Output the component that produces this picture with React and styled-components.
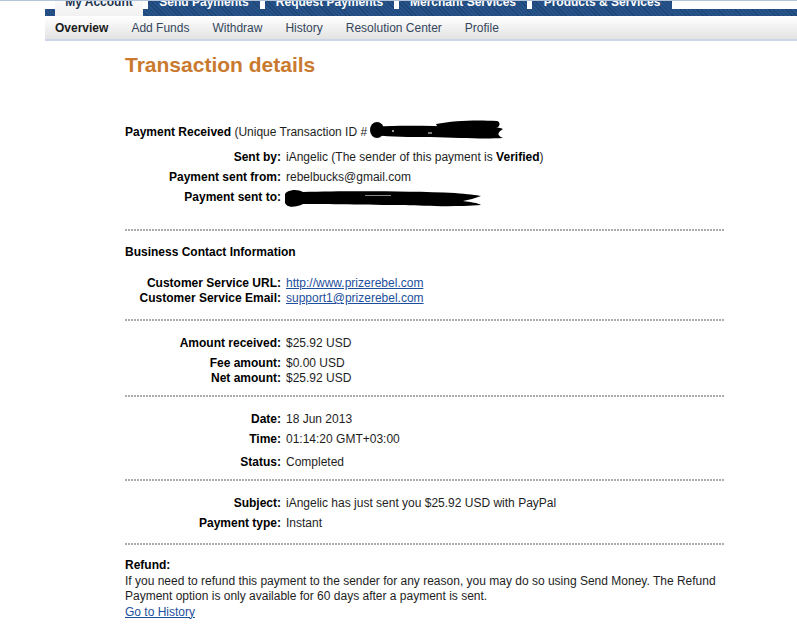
import React from 'react';
import styled, { createGlobalStyle } from 'styled-components';

const Global = createGlobalStyle`
  html, body { margin: 0; padding: 0; background: #fff; }
  body {
    font-family: "Liberation Sans", Arial, sans-serif;
    font-size: 12px;
    color: #1e1e1e;
  }
`;

const Header = styled.header`
  border-top: 1px solid #b5c5d9;
`;

const TabBar = styled.nav`
  margin-left: 45px;
  height: 15px;
  display: flex;
  gap: 5px;
  padding-left: 10px;
  overflow: hidden;
  background:
    linear-gradient(to bottom, #fff 0 8px, transparent 8px),
    repeating-linear-gradient(45deg, #1c4676 0 1px, #27538a 1px 3px);
`;

const Tab = styled.div`
  width: ${p => p.$w}px;
  flex: none;
  height: 15px;
  overflow: hidden;
  display: flex;
  justify-content: center;
  font-weight: bold;
  font-size: 12px;
  color: ${p => (p.$active ? '#1f3450' : '#fff')};
  background: ${p =>
    p.$active
      ? 'linear-gradient(to bottom, #fafafa, #f1f1f1)'
      : 'repeating-linear-gradient(45deg, #1c4676 0 1px, #27538a 1px 3px)'};
`;

const TabText = styled.span`
  display: block;
  line-height: 14px;
  margin-top: -6px;
  white-space: nowrap;
`;

const SubNav = styled.nav`
  margin-left: 45px;
  height: 23px;
  display: flex;
  align-items: center;
  gap: 23px;
  padding-left: 10px;
  background: linear-gradient(to bottom, #ffffff, #e3e3e3);
  border-bottom: 2px solid #cad6e5;
`;

const SubItem = styled.span`
  line-height: 23px;
  padding-top: 1px;
  font-size: 12px;
  color: ${p => (p.$active ? '#1a1a1a' : '#34465c')};
  font-weight: ${p => (p.$active ? 'bold' : 'normal')};
`;

const Main = styled.main`
  margin-left: 125px;
  width: 600px;
`;

const Title = styled.h1`
  margin: 12px 0 0;
  font-size: 21px;
  line-height: 24px;
  font-weight: bold;
  color: #c97a2f;
`;

const Line = styled.div`
  line-height: 16px;
  margin-top: ${p => p.$mt ?? 0}px;
  white-space: nowrap;
`;

const Strong = styled.b`
  color: #000;
`;

const Field = styled.div`
  display: grid;
  grid-template-columns: 156px 1fr;
  column-gap: 5px;
  line-height: 16px;
  margin-top: ${p => p.$mt ?? 4}px;
  white-space: nowrap;
`;

const Label = styled.span`
  font-weight: bold;
  text-align: right;
  color: #000;
`;

const Value = styled.span`
  position: relative;
`;

const Divider = styled.hr`
  border: 0;
  height: 2px;
  margin: ${p => p.$mt}px 0 0;
  background: repeating-linear-gradient(to right, #acacac 0 2px, transparent 2px 3px);
`;

const Link = styled.a`
  color: #1d4f9c;
  text-decoration: underline;
`;

const Refund = styled.div`
  margin-top: 13px;
  line-height: 15.5px;
  white-space: nowrap;
`;

const Redact = styled.span`
  position: relative;
  display: inline-block;
  width: ${p => p.$w}px;
  height: 16px;
  vertical-align: top;
`;

const RedactSvg = styled.svg`
  position: absolute;
  left: ${p => p.$x}px;
  top: ${p => p.$y}px;
`;

function IdBlob() {
  return (
    <Redact $w={135}>
      <RedactSvg $x={0} $y={-6} width="140" height="24" viewBox="0 0 140 24">
        <ellipse cx="7" cy="12" rx="7" ry="8" fill="#000" />
        <path d="M6 9 C30 7 60 8 90 9 C110 9 125 8 133 11 C128 14 126 17 133 20 C115 21 90 20 60 19 C40 19 20 19 6 17 Z" fill="#000" />
        <path d="M66 6 C85 2 110 2 127 3 C131 4 130 9 126 10 C110 10 85 10 68 10 Z" fill="#000" />
        <rect x="22" y="12" width="2" height="2" fill="#999" />
        <rect x="58" y="14" width="4" height="2" fill="#777" />
      </RedactSvg>
    </Redact>
  );
}

function ToBlob() {
  return (
    <RedactSvg $x={-1} $y={-1} width="200" height="22" viewBox="0 0 200 22">
      <path d="M2 4 C8 1 14 2 18 4 C60 3 120 3 170 5 C182 6 192 7 196 8 C190 10 184 12 178 13 C186 14 193 15 196 17 C170 19 140 18 120 17 C80 17 40 16 18 16 C12 19 4 20 2 17 Z" fill="#000" />
      <path d="M0 6 C2 3 6 3 8 5 L10 15 C6 19 2 19 0 15 Z" fill="#000" />
      <rect x="80" y="7" width="26" height="1" fill="#888" />
    </RedactSvg>
  );
}

const tabs = [
  { label: 'My Account', w: 88, active: true },
  { label: 'Send Payments', w: 112 },
  { label: 'Request Payments', w: 129 },
  { label: 'Merchant Services', w: 128 },
  { label: 'Products & Services', w: 140 },
];

const subItems = ['Overview', 'Add Funds', 'Withdraw', 'History', 'Resolution Center', 'Profile'];

export default function App() {
  return (
    <>
      <Global />
      <Header>
        <TabBar>
          {tabs.map(t => (
            <Tab key={t.label} $w={t.w} $active={t.active}>
              <TabText>{t.label}</TabText>
            </Tab>
          ))}
        </TabBar>
        <SubNav>
          {subItems.map((s, i) => (
            <SubItem key={s} $active={i === 0}>{s}</SubItem>
          ))}
        </SubNav>
      </Header>
      <Main>
        <Title>Transaction details</Title>

        <Line $mt={47}>
          <Strong>Payment Received</Strong> (Unique Transaction ID # <IdBlob />
        </Line>
        <Field $mt={9}>
          <Label>Sent by:</Label>
          <Value>iAngelic (The sender of this payment is <Strong>Verified</Strong>)</Value>
        </Field>
        <Field>
          <Label>Payment sent from:</Label>
          <Value>rebelbucks@gmail.com</Value>
        </Field>
        <Field>
          <Label>Payment sent to:</Label>
          <Value><ToBlob /></Value>
        </Field>

        <Divider $mt={24} />

        <Line $mt={13}><Strong>Business Contact Information</Strong></Line>
        <Field $mt={15}>
          <Label>Customer Service URL:</Label>
          <Value><Link href="#">http://www.prizerebel.com</Link></Value>
        </Field>
        <Field $mt={-1}>
          <Label>Customer Service Email:</Label>
          <Value><Link href="#">support1@prizerebel.com</Link></Value>
        </Field>

        <Divider $mt={13} />

        <Field $mt={14}>
          <Label>Amount received:</Label>
          <Value>$25.92 USD</Value>
        </Field>
        <Field>
          <Label>Fee amount:</Label>
          <Value>$0.00 USD</Value>
        </Field>
        <Field $mt={-1}>
          <Label>Net amount:</Label>
          <Value>$25.92 USD</Value>
        </Field>

        <Divider $mt={9} />

        <Field $mt={14}>
          <Label>Date:</Label>
          <Value>18 Jun 2013</Value>
        </Field>
        <Field>
          <Label>Time:</Label>
          <Value>01:14:20 GMT+03:00</Value>
        </Field>
        <Field $mt={7}>
          <Label>Status:</Label>
          <Value>Completed</Value>
        </Field>

        <Divider $mt={9} />

        <Field $mt={14}>
          <Label>Subject:</Label>
          <Value>iAngelic has just sent you $25.92 USD with PayPal</Value>
        </Field>
        <Field>
          <Label>Payment type:</Label>
          <Value>Instant</Value>
        </Field>

        <Divider $mt={12} />

        <Refund>
          <Strong>Refund:</Strong>
          <br />
          If you need to refund this payment to the sender for any reason, you may do so using Send Money. The Refund
          <br />
          Payment option is only available for 60 days after a payment is sent.
          <br />
          <Link href="#">Go to History</Link>
        </Refund>
      </Main>
    </>
  );
}
